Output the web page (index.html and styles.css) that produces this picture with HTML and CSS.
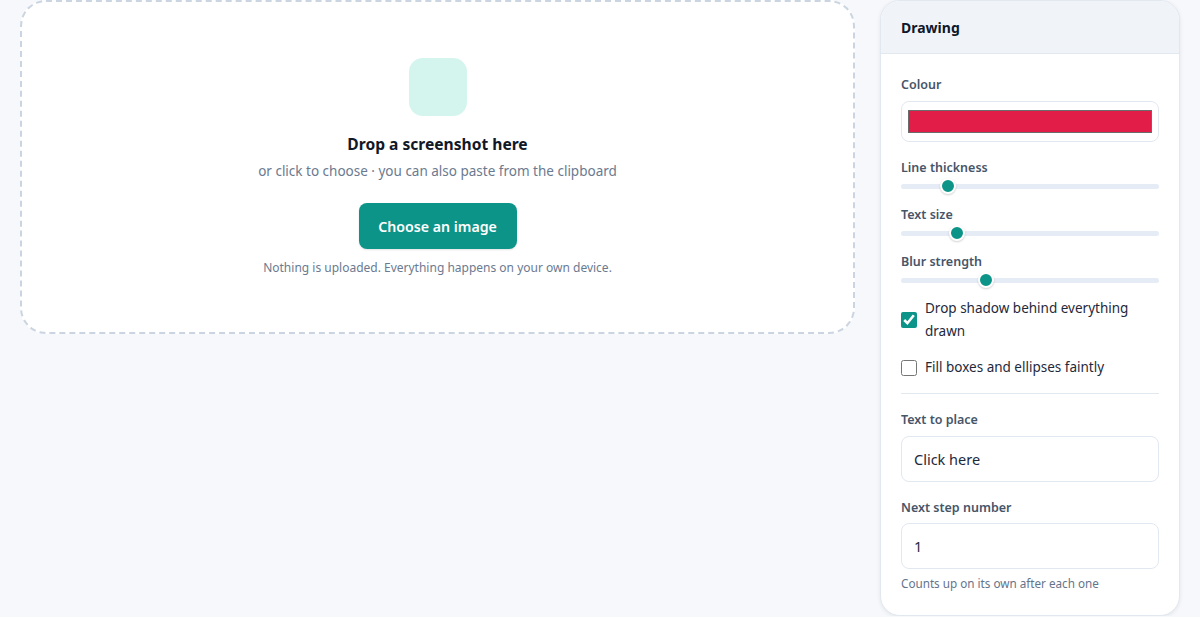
FILE: index.html
```html
<!DOCTYPE html>
<html lang="en">
<head>
<meta charset="utf-8">
<title>Annotate a screenshot</title>
<link rel="stylesheet" href="styles.css">
</head>
<body>
<div class="layout">
  <section class="dropzone">
    <div class="drop-icon"></div>
    <h2 class="drop-title">Drop a screenshot here</h2>
    <p class="drop-sub">or click to choose · you can also paste from the clipboard</p>
    <button class="choose-btn" type="button">Choose an image</button>
    <p class="drop-note">Nothing is uploaded. Everything happens on your own device.</p>
  </section>

  <aside class="panel">
    <div class="panel-head">Drawing</div>
    <div class="panel-body">
      <div class="field">
        <div class="label">Colour</div>
        <div class="colour-box"><div class="swatch"></div></div>
      </div>
      <div class="slider-field">
        <div class="label">Line thickness</div>
        <input class="range" type="range" min="0" max="100" value="16">
      </div>
      <div class="slider-field">
        <div class="label">Text size</div>
        <input class="range" type="range" min="0" max="100" value="20">
      </div>
      <div class="slider-field">
        <div class="label">Blur strength</div>
        <input class="range" type="range" min="0" max="100" value="32">
      </div>
      <label class="check first">
        <input type="checkbox" checked>
        <span>Drop shadow behind everything drawn</span>
      </label>
      <label class="check single">
        <input type="checkbox">
        <span>Fill boxes and ellipses faintly</span>
      </label>
      <hr class="divider">
      <div class="input-field">
        <div class="label">Text to place</div>
        <input class="text-input" type="text" value="Click here">
      </div>
      <div class="input-field second">
        <div class="label">Next step number</div>
        <input class="text-input" type="text" value="1">
        <div class="hint">Counts up on its own after each one</div>
      </div>
    </div>
  </aside>
</div>
</body>
</html>
```

FILE: styles.css
```css
* { box-sizing: border-box; }

html, body {
  margin: 0;
  padding: 0;
}

body {
  background: #f6f8fb;
  font-family: "Noto Sans", "Open Sans", sans-serif;
  color: #0f172a;
}

.layout {
  display: grid;
  grid-template-columns: 835px 300px;
  column-gap: 25px;
  padding: 0 20px;
  align-items: start;
}

.dropzone {
  height: 334px;
  border: 2px dashed #cbd5e1;
  border-radius: 26px;
  background: #ffffff;
  display: flex;
  flex-direction: column;
  align-items: center;
  padding-top: 56px;
}

.drop-icon {
  width: 58px;
  height: 58px;
  border-radius: 14px;
  background: #d4f5ed;
}

.drop-title {
  margin: 17px 0 0;
  font-size: 15.6px;
  font-weight: 700;
  line-height: 22px;
  color: #111827;
}

.drop-sub {
  margin: 7px 0 0;
  font-size: 13.5px;
  line-height: 19px;
  color: #6b7a90;
}

.choose-btn {
  margin-top: 22px;
  width: 158px;
  height: 46px;
  border: none;
  border-radius: 8px;
  background: #0d9488;
  color: #ffffff;
  font-family: inherit;
  font-size: 14.2px;
  font-weight: 600;
  box-shadow: 0 1px 2px rgba(15, 23, 42, 0.12);
}

.drop-note {
  margin: 11px 0 0;
  font-size: 12px;
  line-height: 16px;
  color: #6b7a90;
}

.panel {
  background: #ffffff;
  border: 1px solid #e2e8f0;
  border-radius: 20px;
  box-shadow: 0 1px 4px rgba(15, 23, 42, 0.08);
  overflow: hidden;
  height: 616px;
}

.panel-head {
  height: 53px;
  background: #f0f4f9;
  border-bottom: 1px solid #e2e8f0;
  padding: 0 20px;
  display: flex;
  align-items: center;
  font-size: 14px;
  font-weight: 700;
  color: #0f172a;
}

.panel-body {
  padding: 22px 20px 0;
  display: flex;
  flex-direction: column;
}

.label {
  font-size: 12.5px;
  font-weight: 600;
  line-height: 17px;
  color: #475569;
}

.colour-box {
  margin-top: 8px;
  height: 41px;
  border: 1px solid #e2e8f0;
  border-radius: 8px;
  padding: 8px 6px;
  background: #fff;
}

.swatch {
  height: 23px;
  background: #e11d48;
  border: 1px solid #6b6b6b;
}

.slider-field { margin-top: 17px; }
.slider-field + .slider-field { margin-top: 12px; }

.range {
  -webkit-appearance: none;
  appearance: none;
  display: block;
  width: 100%;
  height: 16px;
  margin: 2px 0 0;
  background: transparent;
}

.range::-webkit-slider-runnable-track {
  height: 5px;
  border-radius: 3px;
  background: #e5ecf5;
}

.range::-webkit-slider-thumb {
  -webkit-appearance: none;
  appearance: none;
  width: 16px;
  height: 16px;
  margin-top: -5.5px;
  border-radius: 50%;
  background: #0d9488;
  border: 2px solid #ffffff;
  box-shadow: 0 1px 2px rgba(15, 23, 42, 0.2);
}

.check {
  display: flex;
  align-items: center;
  gap: 8px;
  font-size: 13.5px;
  line-height: 23px;
  color: #1e293b;
}

.check.first { margin-top: 9px; }
.check.single { margin-top: 13px; }

.check input {
  width: 16px;
  height: 16px;
  margin: 0;
  flex: none;
  accent-color: #0d9488;
}

.divider {
  border: none;
  border-top: 1px solid #e2e8f0;
  margin: 14px 0 17px;
  width: 100%;
}

.text-input {
  display: block;
  width: 100%;
  height: 46px;
  margin-top: 8px;
  border: 1px solid #e2e8f0;
  border-radius: 8px;
  padding: 0 12px;
  font-family: inherit;
  font-size: 14.5px;
  color: #1e293b;
  background: #fff;
}

.input-field.second { margin-top: 17px; }
.input-field.second .text-input { margin-top: 7px; }

.hint {
  margin-top: 6px;
  font-size: 11.7px;
  line-height: 16px;
  color: #64748b;
}
```
